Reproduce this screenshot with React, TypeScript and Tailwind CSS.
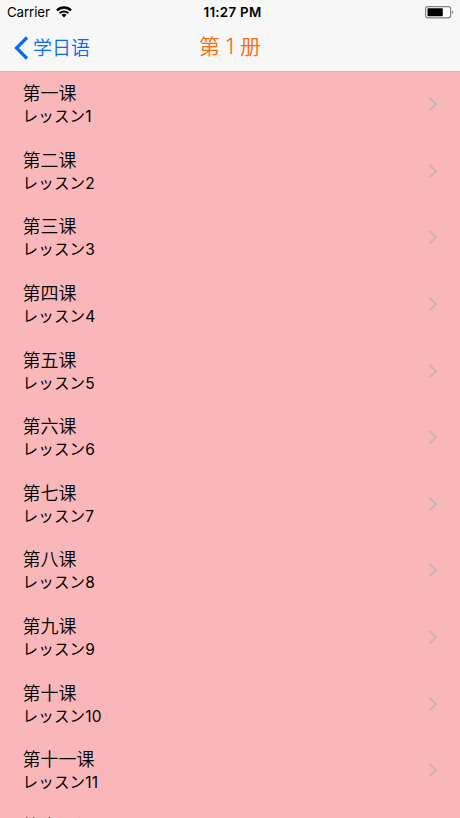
import React from "react";

const lessons = [
  "第一课",
  "第二课",
  "第三课",
  "第四课",
  "第五课",
  "第六课",
  "第七课",
  "第八课",
  "第九课",
  "第十课",
  "第十一课",
  "第十二课",
];

const StatusBar = () => {
  return (
    <div className="grid h-6 grid-cols-3 items-center pl-[7px] pr-[6px] text-[13.3px] leading-6 text-black">
      <div className="flex items-center gap-[6px]">
        <span className="tracking-[-0.1px]">Carrier</span>
        <svg width="16" height="12" viewBox="0 0 16 12" fill="none">
          <path d="M1 4.4a10 10 0 0 1 14 0" stroke="#000" strokeWidth="2.4" />
          <path d="M3.6 7.3a6.3 6.3 0 0 1 8.8 0" stroke="#000" strokeWidth="2.2" />
          <path d="M8 11.4 5.6 9a3.5 3.5 0 0 1 4.8 0Z" fill="#000" />
        </svg>
      </div>
      <div className="pl-[4px] text-center font-semibold tracking-[0.3px]">11:27 PM</div>
      <div className="flex justify-end">
        <svg width="29" height="13" viewBox="0 0 29 13">
          <rect x="0.6" y="0.6" width="25" height="11.3" rx="2.4" fill="#fff" stroke="#808080" strokeWidth="1.2" />
          <rect x="2.5" y="2.3" width="15.3" height="8" rx="0.7" fill="#000" />
          <path d="M27.2 4.5c1.6.4 1.6 3.1 0 3.5Z" fill="#777" />
        </svg>
      </div>
    </div>
  );
};

const NavBar = () => {
  return (
    <div className="grid h-[47px] grid-cols-3 items-center text-[19px] font-[350]">
      <div className="flex items-center gap-[4px] pl-[14px] text-[#0869f5]">
        <svg width="15" height="24" viewBox="0 0 15 24" fill="none">
          <path d="M13 1.5 2.5 12 13 22.5" stroke="currentColor" strokeWidth="3.2" />
        </svg>
        <span className="pt-[2px] leading-6">学日语</span>
      </div>
      <div className="-mt-px whitespace-pre text-center text-[21px] leading-6 text-[#f96b05]">第 1 册</div>
    </div>
  );
};

const LessonRow = ({ title, content }: { title: string; content: string }) => {
  return (
    <div className="flex h-[66.65px] shrink-0 flex-row pl-[22.5px]">
      <div className="flex flex-1 justify-between border-b border-[#f7b5b7] pr-[22px]">
        <div className="pt-[9px] text-black">
          <div className="text-[18px] font-[350] leading-[25px]">{title}</div>
          <div className="text-[15.5px] leading-[21px] tracking-[0.2px]">{content}</div>
        </div>
        <svg className="mt-[24px]" width="10" height="16" viewBox="0 0 10 16" fill="none">
          <path d="M1.5 2 8 8.2 1.5 14.4" stroke="#c9b1b5" strokeWidth="2" />
        </svg>
      </div>
    </div>
  );
};

export default function App() {
  return (
    <div className="flex h-[818px] w-[460px] flex-col overflow-hidden bg-[#fab7b9] font-[Inter,'Noto_Sans_CJK_SC',sans-serif]">
      <div className="shrink-0 border-b border-[#c8b9ba] bg-[#f7f7f7]">
        <StatusBar />
        <NavBar />
      </div>
      <div className="flex flex-col">
        {lessons.map((title, i) => (
          <LessonRow key={title} title={title} content={`レッスン${i + 1}`} />
        ))}
      </div>
    </div>
  );
}
